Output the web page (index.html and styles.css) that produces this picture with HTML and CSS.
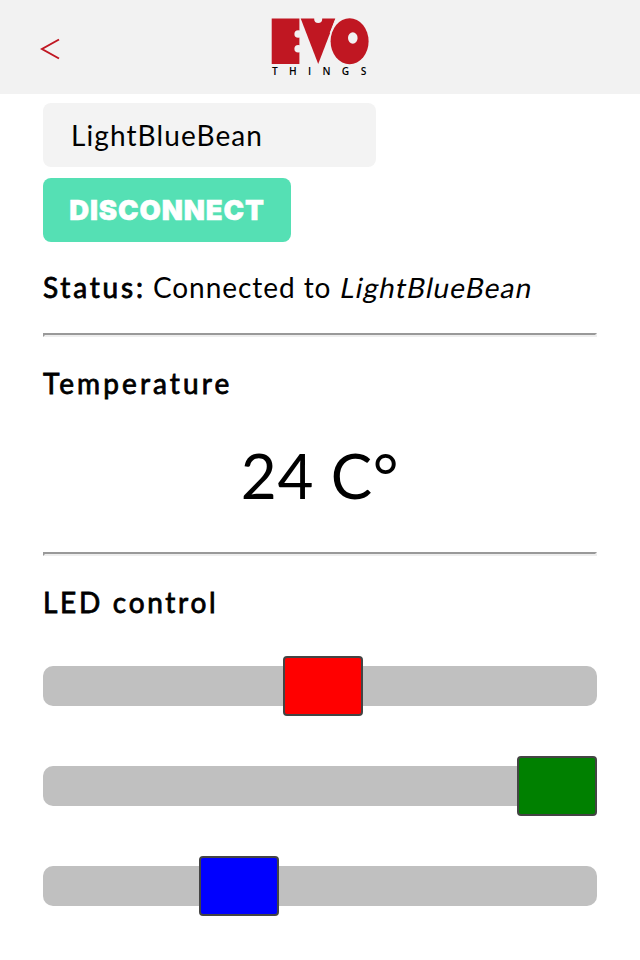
FILE: index.html
```html
<!DOCTYPE html>
<html lang="en">
<head>
<meta charset="utf-8">
<title>LightBlueBean</title>
<link rel="stylesheet" href="styles.css">
</head>
<body>
<header class="header">
  <button class="back" aria-label="Back">
    <svg width="20" height="22" viewBox="0 0 20 22"><path d="M19 1.5 2 11l17 9.5" fill="none" stroke="#c01722" stroke-width="2"/></svg>
  </button>
  <svg class="logo" width="98" height="60" viewBox="0 0 98 60" role="img" aria-label="Evothings">
    <g fill="#c01722">
      <rect x=".7" y="0.5" width="27.7" height="45.5"/>
      <path d="M29.7 .5h35L47.2 46z"/>
      <ellipse cx="78.6" cy="23.2" rx="19" ry="23"/>
    </g>
    <g fill="#f2f2f2">
      <circle cx="27.2" cy="16" r="3.8"/>
      <circle cx="27.2" cy="30.7" r="3.8"/>
      <circle cx="47.2" cy="1" r="4"/>
      <ellipse cx="81.8" cy="20" rx="4.8" ry="5.7"/>
    </g>
    <path d="M65 0 59.2 15" stroke="#f2f2f2" stroke-width="1"/>
    <text class="logo-text" y="57.2" x="1 18 37 51.4 70.7 89.8">THINGS</text>
  </svg>
</header>
<main class="content">
  <div class="device">LightBlueBean</div>
  <button class="disconnect">DISCONNECT</button>
  <p class="status"><strong>Status:</strong> <span class="state">Connected to</span> <em>LightBlueBean</em></p>
  <hr>
  <h2 class="temp-title">Temperature</h2>
  <p class="temperature">24 C°</p>
  <hr>
  <h2 class="led-title">LED control</h2>
  <div class="sliders">
    <div class="slider"><div class="thumb red"></div></div>
    <div class="slider"><div class="thumb green"></div></div>
    <div class="slider"><div class="thumb blue"></div></div>
  </div>
</main>
</body>
</html>
```
FILE: styles.css
```css
* { box-sizing: border-box; }
body {
  margin: 0;
  min-height: 960px;
  background: #fff;
  color: #000;
  font: 28px/40px Lato, "Open Sans", sans-serif;
}
.header {
  height: 94px;
  padding: 18px 41px 0;
  display: grid;
  grid-template-columns: 1fr 98px 1fr;
  background: #f2f2f2;
}
.back {
  width: 20px;
  height: 22px;
  margin: 20px 0 0 -1px;
  padding: 0;
  border: 0;
  background: none;
}
.back svg, .logo { display: block; }
.logo-text { font: 600 10.2px "Open Sans", sans-serif; fill: #000; }
.content { padding: 9px 43px 0; }
.device {
  width: 333px;
  height: 64px;
  padding: 0 28px;
  border-radius: 8px;
  background: #f3f3f3;
  line-height: 64px;
  letter-spacing: 1.1px;
}
.disconnect {
  display: block;
  width: 248px;
  height: 64px;
  margin-top: 11px;
  padding: 1px 0 0;
  border: 0;
  border-radius: 8px;
  background: #55e0b4;
  color: #fff;
  font: 900 27.5px/63px Inter, sans-serif;
  letter-spacing: .9px;
  -webkit-text-stroke: .5px #fff;
}
.status { height: 40px; margin: 25px 0 26px; white-space: nowrap; }
.status strong, h2 { font-weight: 400; -webkit-text-stroke: .8px #000; }
.status strong { letter-spacing: 2.8px; }
.state { letter-spacing: .95px; }
.status em {
  display: inline-block;
  margin-left: 2px;
  font-style: normal;
  letter-spacing: 1.1px;
  transform: skewX(-11deg);
}
hr {
  height: 4px;
  margin: 0;
  border: 2px solid;
  border-color: #999 #eee #eee #999;
}
h2 {
  height: 40px;
  margin: 26px 0 0;
  font-size: 28px;
  line-height: 40px;
}
.temp-title { letter-spacing: 3.1px; }
.led-title { letter-spacing: 2.7px; }
.temperature {
  height: 80px;
  margin: 32px 0 37px;
  font-size: 62px;
  line-height: 80px;
  letter-spacing: .7px;
  text-align: center;
}
.sliders { display: grid; gap: 60px; margin-top: 44px; }
.slider {
  height: 40px;
  border-radius: 10px;
  background: #c0c0c0;
  display: flex;
  align-items: center;
}
.thumb {
  flex: none;
  width: 80px;
  height: 60px;
  border: 2px solid #444;
  border-radius: 4px;
}
.red { margin-left: 240px; background: #f00; }
.green { margin-left: auto; background: #008000; }
.blue { margin-left: 156px; background: #00f; }
```
